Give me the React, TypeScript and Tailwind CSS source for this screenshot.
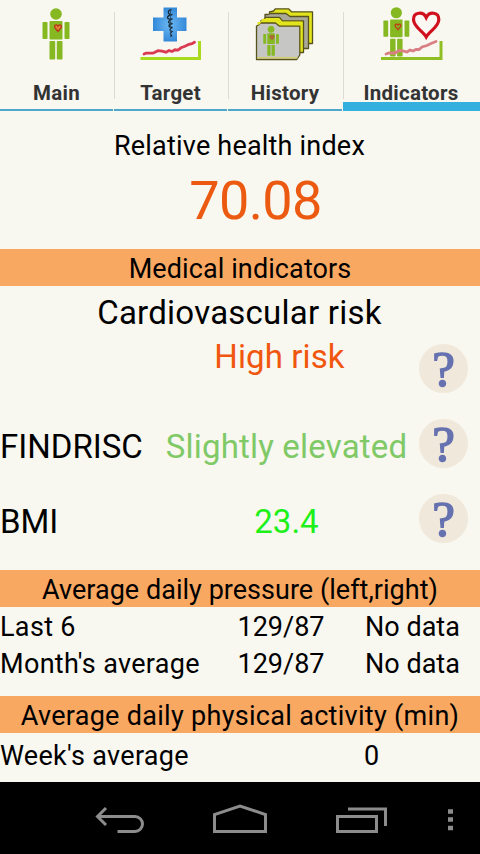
import type { ReactNode } from "react";

const HEART = "M0 9C-3 5-9 1-9-4C-9-9-2-10 0-5C2-10 9-9 9-4C9 1 3 5 0 9Z";

function Person() {
  return (
    <g fill="#86b822">
      <circle cx="16.5" cy="6" r="5.8" />
      <rect x="3" y="14" width="5" height="17" rx="0.8" />
      <rect x="10" y="13" width="13" height="18.5" rx="1" />
      <rect x="25" y="14" width="5" height="17" rx="0.8" />
      <rect x="10" y="33" width="5.7" height="18.5" rx="0.8" />
      <rect x="17.3" y="33" width="5.7" height="18.5" rx="0.8" />
    </g>
  );
}

function MainIcon() {
  return (
    <svg className="h-[68px] w-[114px]" viewBox="0 0 114 68">
      <g transform="translate(39.5 8)">
        <Person />
      </g>
      <path d={HEART} transform="translate(58 28) scale(.38)" fill="#e08a3a" stroke="#b8321a" strokeWidth="3.6" />
    </svg>
  );
}

function TargetIcon() {
  return (
    <svg className="h-[68px] w-[114px]" viewBox="114 0 114 68">
      <defs>
        <radialGradient id="cross">
          <stop offset="0" stopColor="#6db9f4" />
          <stop offset="1" stopColor="#3489d8" />
        </radialGradient>
      </defs>
      <path d="M163.500 7.500h13.500v10h9.500v13.500H177v10.500h-13.500V31h-10.500V17.500h10.500Z" fill="url(#cross)" />
      <path
        d="M171.500 9.500q-4 1-3 3.500t4 1.500q-5 1-5 3t5 1.500q-4 1.500-4 3t4 1.500q-4 1-3.500 2.500t3.500 1.500q-3 1.500-2.500 2.500t2 1.500q-2 1.500-1.500 2.500l1.500 2.500"
        fill="none"
        stroke="#182833"
        strokeWidth="1.300"
      />
      <path d="M170.500 9v28" stroke="#2b4a63" strokeWidth="0.800" />
      <path
        d="M144 54l2-.8h7l5-2.500 4 .5 4 1 3-1.700 3 1 3-1.700 3 .3 3-2.300 4-1.500 4-2 3-.6 2.500-1.500"
        fill="none"
        stroke="#d93a50"
        strokeWidth="2.800"
        strokeLinecap="round"
      />
      <path d="M140.500 58.500h59v-17.500" fill="none" stroke="#a9da1c" strokeWidth="3" />
    </svg>
  );
}

function HistoryIcon() {
  return (
    <svg className="h-[68px] w-[115px]" viewBox="228 0 115 68">
      <g stroke="#57531c" strokeWidth="1.300" strokeLinejoin="round">
        <path d="M269.500 14v-2l4-1 2-2.200h13l3 3h21V43.500h-43Z" fill="#e3e51c" />
        <path d="M265 19v-4.500h3l3-1h15l4 3h18.500V48.500H265Z" fill="#a9a899" />
        <path d="M261 24v-3.500l3-1 1.500-2.200h14l3 3.500h21V52.500H261Z" fill="#e3e51c" />
        <path d="M256.500 59.500V26l2-1 2-2h15l4 3.200h20.300v28.800l-3 4.500Z" fill="#c6c6c4" />
      </g>
      <path d="M257.500 24.800v-2.500l3-.5 2-3h11l3.500 3h24v2.700h-21.500l-4-2.600h-14l-2 2.600Z" fill="#e3e51c" />
      <path d="M257.500 57.700h40" stroke="#d5cf6a" strokeWidth="1.500" />
      <g transform="translate(261.500 25.800) scale(.58)">
        <Person />
      </g>
      <path d={HEART} transform="translate(272 37.500) scale(.24)" fill="#b86a3c" stroke="#a8502c" strokeWidth="3" />
    </svg>
  );
}

function IndicatorsIcon() {
  return (
    <svg className="h-[68px] w-[137px]" viewBox="343 0 137 68">
      <g transform="translate(380.500 7) scale(.96)">
        <Person />
      </g>
      <path d={HEART} transform="translate(398 26.700) scale(.32)" fill="none" stroke="#c03a18" strokeWidth="4" />
      <path
        d="M426.200 37C423 31 413.500 27 413.500 19.500C413.500 11.500 423.500 11.500 426.200 17.500C429 11.500 438.800 11.500 438.800 19.500C438.800 27 429.500 31 426.200 37Z"
        fill="#fbf8f4"
        stroke="#d0101c"
        strokeWidth="3.200"
      />
      <path
        d="M386 54l3-1h6l4-2.500 4 .5 4 1 3-2 3 1 3-1.500h3l3-2.500 5-1.500 4-2 5-2"
        fill="none"
        stroke="#d98084"
        strokeWidth="2.800"
        strokeLinecap="round"
      />
      <path d="M381 58.500h60v-17.500" fill="none" stroke="#8fbf25" strokeWidth="3" />
    </svg>
  );
}

interface TabProps {
  label: string;
  icon: ReactNode;
  className: string;
  active?: boolean;
}

function Tab({ label, icon, className, active }: TabProps) {
  return (
    <div className={`relative flex h-[111px] flex-col items-center ${className}`}>
      {icon}
      <span className="mt-[13px] pr-px text-[20.5px] leading-6 font-bold tracking-[0.25px] text-[#333]">{label}</span>
      <div
        className={
          active
            ? "absolute inset-x-0 bottom-0 h-[9px] bg-[#33b0de]"
            : "absolute bottom-0 left-0 right-px h-0.5 bg-[#4fa8cc]"
        }
      />
      {label !== "Main" && <div className="absolute top-3 left-0 h-[87px] w-px bg-[#dcdcd4]" />}
    </div>
  );
}

function SectionTitle({ children, className = "" }: { children: ReactNode; className?: string }) {
  return (
    <h2 className={`h-[37px] bg-[#f9a862] text-center text-[27px] leading-[41px] whitespace-nowrap ${className}`}>
      {children}
    </h2>
  );
}

function HelpButton() {
  return (
    <button className="mr-3 flex size-[49px] shrink-0 items-center justify-center rounded-full bg-[#f0e8da] font-['Liberation_Serif',serif] text-[51px] leading-[46px] text-[#6672b0] [-webkit-text-stroke:1.5px_#6672b0]">
      ?
    </button>
  );
}

const pressure = [
  { label: "Last 6", left: "129/87", right: "No data" },
  { label: "Month's average", left: "129/87", right: "No data" },
];

export default function App() {
  return (
    <div className="flex h-[854px] w-[480px] flex-col overflow-hidden bg-[#f8f7f0] font-[Roboto,sans-serif] text-black">
      <nav className="flex">
        <Tab label="Main" icon={<MainIcon />} className="w-[114px]" />
        <Tab label="Target" icon={<TargetIcon />} className="w-[114px]" />
        <Tab label="History" icon={<HistoryIcon />} className="w-[115px]" />
        <Tab label="Indicators" icon={<IndicatorsIcon />} className="w-[137px]" active />
      </nav>

      <main className="flex h-[671px] flex-col">
        <p className="mt-[17px] pr-px text-center text-[27px] leading-[37px] tracking-[0.2px]">Relative health index</p>
        <p className="mt-1 h-[80px] pl-[31px] text-center text-[54px] leading-[64px] tracking-[-0.6px] text-[#eb5a10]">
          70.08
        </p>

        <SectionTitle className="tracking-[0.1px]">Medical indicators</SectionTitle>
        <p className="mt-[5px] pr-px text-center text-[33px] leading-[44px] tracking-[0.24px]">Cardiovascular risk</p>
        <div className="flex h-[65px]">
          <span className="flex-1 pl-[140px] text-center text-[33px] leading-[44px] tracking-[0.1px] text-[#f0560e]">
            High risk
          </span>
          <div className="pt-[9px]">
            <HelpButton />
          </div>
        </div>
        <div className="mt-[6px] flex h-[75px] items-center">
          <span className="w-[154px] pt-1.5 text-[33px]">FINDRISC</span>
          <span className="flex-1 pt-1.5 text-center text-[33px] tracking-[0.18px] whitespace-nowrap text-[#7fc967]">
            Slightly elevated
          </span>
          <HelpButton />
        </div>
        <div className="flex h-[75px] items-center">
          <span className="w-[154px] pt-1.5 text-[33px]">BMI</span>
          <span className="flex-1 pt-1.5 text-center text-[33px] text-[#1ff01a]">23.4</span>
          <HelpButton />
        </div>

        <SectionTitle className="mt-[14px] tracking-[0.03px]">Average daily pressure (left,right)</SectionTitle>
        {pressure.map((row) => (
          <div key={row.label} className="flex h-[37px] text-[27px] leading-[41px] whitespace-nowrap">
            <span className="w-[217px] tracking-[0.33px]">{row.label}</span>
            <span className="w-[128px] text-center">{row.left}</span>
            <span className="flex-1 text-center">{row.right}</span>
          </div>
        ))}
        <SectionTitle className="mt-[15px] tracking-[0.3px]">Average daily physical activity (min)</SectionTitle>
        <div className="mt-[5px] flex text-[27px] leading-[37px]">
          <span className="w-[263px] tracking-[0.3px]">Week's average</span>
          <span className="flex-1 text-center">0</span>
        </div>
      </main>

      {/* System navigation bar */}
      <footer className="h-[72px] bg-black">
        <svg className="h-[72px] w-[480px]" viewBox="0 782 480 72" fill="none" stroke="#8c8c8c" strokeWidth="3">
          <path d="M97.500 816.500h37.500a7.500 7.500 0 0 1 0 15h-17.500M106 808l-8.500 8.500 8.500 8.500" />
          <path d="M214.500 831.500v-17l25.500-8.500 25.500 8.500v17Z" />
          <path d="M337.500 816.500h39v15h-39ZM348 809h37.500v17" />
          <path d="M448 811.500h5M448 819.500h5M448 828h5" strokeWidth="4.500" />
        </svg>
      </footer>
    </div>
  );
}
